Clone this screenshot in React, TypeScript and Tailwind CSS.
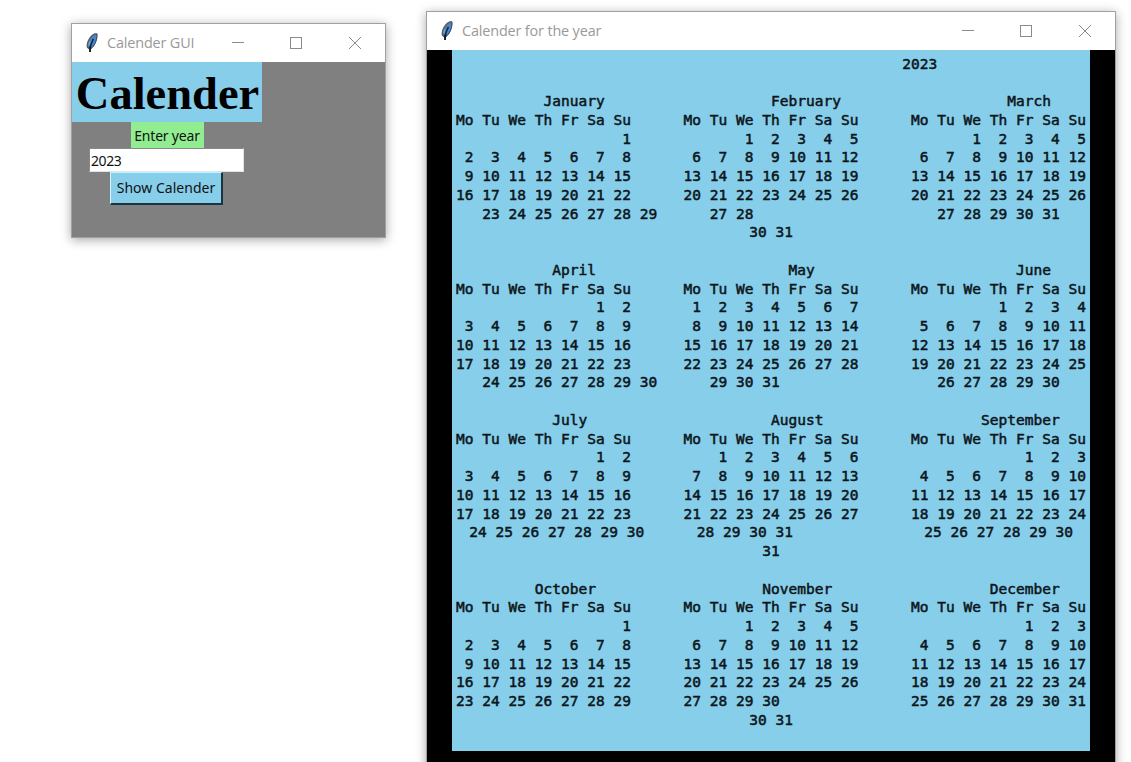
import React from "react";

type WindowProps = { title: string; className: string; children: React.ReactNode };

const FeatherIcon = () => (
  <svg width="12" height="20" viewBox="0 0 12 20" fill="none">
    <path d="M11 0.6C8 0.8 4.4 3.6 2.4 7.6C1.2 10.2 0.8 12.4 1.4 14.6L3 16L4 19.4L5 16C7.6 14.4 9.6 10.8 10.8 6.2C11.3 4 11.4 2 11 0.6Z" fill="#4a86cc" />
    <path d="M10.8 0.8C8 1 4.4 3.8 2.6 7.6C1.4 10.2 1 12.4 1.6 14.4L3.2 15.6" stroke="#5c5c5c" strokeWidth="1.5" />
    <path d="M10.9 0.8C11.2 2.4 11.1 4 10.6 6.2C9.6 10.4 7.4 14 4.8 15.6" stroke="#3c4450" strokeWidth="1" />
    <path d="M7.4 5.8C5.8 9 4.6 12 4.2 15" stroke="#17263a" strokeWidth="1.5" />
    <path d="M4.2 13.5L4 19" stroke="#151515" strokeWidth="1.8" />
    <path d="M3.6 8.4L2.8 12" stroke="#8fb4dd" strokeWidth="0.9" />
  </svg>
);

const WindowControls = () => (
  <svg width="131" height="13" viewBox="0 0 131 13" fill="none" stroke="#8b8b8b" strokeWidth="1" shapeRendering="crispEdges">
    <path d="M0 6.5H12" />
    <rect x="58.5" y="1.5" width="11" height="11" />
    <path d="M117 1L129 13M129 1L117 13" shapeRendering="auto" />
  </svg>
);

const Window = ({ title, className, children }: WindowProps) => (
  <section className={`flex shrink-0 flex-col border border-[#a0a0a0] bg-white shadow-[0_2px_10px_rgba(0,0,0,0.35)] ${className}`}>
    <header className="flex h-[38px] shrink-0 items-center pb-px pl-[14px] pr-[22px]">
      <FeatherIcon />
      <h2 className="ml-[9px] grow whitespace-nowrap pt-px font-['Open_Sans','Noto_Sans',sans-serif] text-[14.4px] tracking-[-0.14px] text-[#999999]">{title}</h2>
      <WindowControls />
    </header>
    {children}
  </section>
);

const DAYS = "Mo Tu We Th Fr Sa Su";
const row = (a: string, b = "", c = "") => a.padEnd(26) + b.padEnd(26) + c;
const header = row(DAYS, DAYS, DAYS);

type Line = { text: string; half?: boolean };
const full = (text: string): Line => ({ text });
const shifted = (text: string): Line => ({ text, half: true });

const lines: Line[] = [
  full(" ".repeat(51) + "2023"),
  full(""),
  full(row("          January", "          February", "           March")),
  full(header),
  full(row("                   1", "       1  2  3  4  5", "       1  2  3  4  5")),
  full(row(" 2  3  4  5  6  7  8", " 6  7  8  9 10 11 12", " 6  7  8  9 10 11 12")),
  full(row(" 9 10 11 12 13 14 15", "13 14 15 16 17 18 19", "13 14 15 16 17 18 19")),
  full(row("16 17 18 19 20 21 22", "20 21 22 23 24 25 26", "20 21 22 23 24 25 26")),
  full(row("   23 24 25 26 27 28 29", "   27 28", "   27 28 29 30 31")),
  shifted(" ".repeat(33) + "30 31"),
  full(""),
  full(row("           April", "            May", "            June")),
  full(header),
  full(row("                1  2", " 1  2  3  4  5  6  7", "          1  2  3  4")),
  full(row(" 3  4  5  6  7  8  9", " 8  9 10 11 12 13 14", " 5  6  7  8  9 10 11")),
  full(row("10 11 12 13 14 15 16", "15 16 17 18 19 20 21", "12 13 14 15 16 17 18")),
  full(row("17 18 19 20 21 22 23", "22 23 24 25 26 27 28", "19 20 21 22 23 24 25")),
  full(row("   24 25 26 27 28 29 30", "   29 30 31", "   26 27 28 29 30")),
  full(""),
  full(row("           July", "          August", "        September")),
  full(header),
  full(row("                1  2", "    1  2  3  4  5  6", "             1  2  3")),
  full(row(" 3  4  5  6  7  8  9", " 7  8  9 10 11 12 13", " 4  5  6  7  8  9 10")),
  full(row("10 11 12 13 14 15 16", "14 15 16 17 18 19 20", "11 12 13 14 15 16 17")),
  full(row("17 18 19 20 21 22 23", "21 22 23 24 25 26 27", "18 19 20 21 22 23 24")),
  shifted(row(" 24 25 26 27 28 29 30", " 28 29 30 31", " 25 26 27 28 29 30")),
  full(" ".repeat(35) + "31"),
  full(""),
  full(row("         October", "         November", "         December")),
  full(header),
  full(row("                   1", "       1  2  3  4  5", "             1  2  3")),
  full(row(" 2  3  4  5  6  7  8", " 6  7  8  9 10 11 12", " 4  5  6  7  8  9 10")),
  full(row(" 9 10 11 12 13 14 15", "13 14 15 16 17 18 19", "11 12 13 14 15 16 17")),
  full(row("16 17 18 19 20 21 22", "20 21 22 23 24 25 26", "18 19 20 21 22 23 24")),
  full(row("23 24 25 26 27 28 29", "27 28 29 30", "25 26 27 28 29 30 31")),
  shifted(" ".repeat(33) + "30 31"),
];

export default function App() {
  return (
    <main className="flex h-[762px] w-[1131px] items-start overflow-hidden bg-white pl-[71px] pt-[11px]">
      <Window title="Calender GUI" className="mt-3 h-[215px] w-[315px]">
        <div className="flex grow flex-col items-start bg-[#808080] font-['Noto_Sans','Open_Sans',sans-serif] text-[#111111]">
          <div className="flex w-[190px] flex-col items-center">
            <h1 className="flex h-[60px] w-full items-center justify-center bg-[#87ceeb] font-['Liberation_Serif',serif] text-[46.5px] font-bold leading-none text-black">
              <span className="pl-px pt-[5px]">Calender</span>
            </h1>
            <label htmlFor="year" className="flex h-[26px] w-[73px] items-center justify-center whitespace-nowrap bg-[#90ee90] text-[14px] tracking-[-0.2px]">
              Enter year
            </label>
            <input
              id="year"
              defaultValue="2023"
              className="mr-px h-6 w-[155px] border border-b-[#e3e3e3] border-l-[#8a8a8a] border-r-[#e3e3e3] border-t-[#8a8a8a] bg-white px-px text-[14px] tracking-[-0.4px] outline-none"
            />
            <button className="mr-px flex h-[33px] w-[113px] items-center justify-center whitespace-nowrap border-b-2 border-l border-r-2 border-t border-b-[#1d3440] border-l-[#d5f3ff] border-r-[#1d3440] border-t-[#b9f5ff] bg-[#87ceeb] pb-px text-[14px] tracking-[0.02px]">
              Show Calender
            </button>
          </div>
        </div>
      </Window>

      <Window title="Calender for the year" className="ml-10 h-[790px] w-[690px]">
        <div className="grow bg-black px-[25px]">
          <div className="h-[701px] bg-[#87ceeb] pl-[4px] pt-[4.6px] font-['DejaVu_Sans_Mono',monospace] text-[14.53px] leading-[18.75px] tracking-[0.012px] text-[#0c1519] [-webkit-text-stroke:0.5px_#0c1519]">
            {lines.map((line, i) => (
              <div key={i} className={`h-[18.75px] whitespace-pre ${line.half ? "pl-[4.375px]" : ""}`}>
                {line.text}
              </div>
            ))}
          </div>
        </div>
      </Window>
    </main>
  );
}
